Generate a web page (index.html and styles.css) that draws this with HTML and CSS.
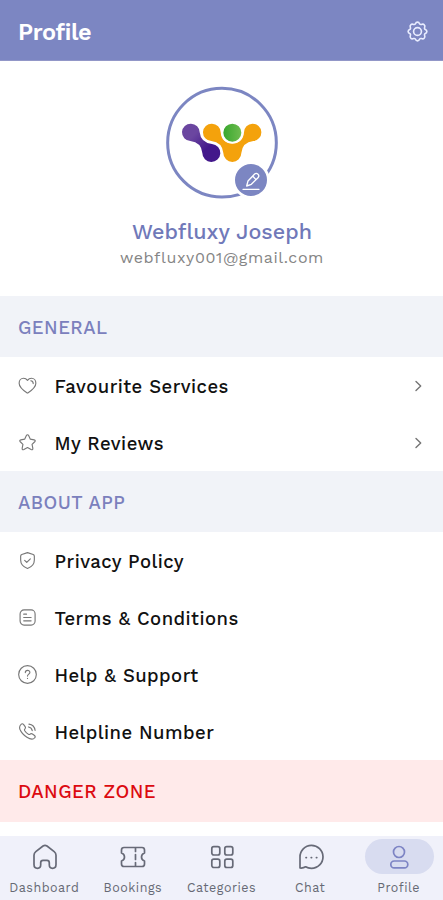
FILE: index.html
```html
<!DOCTYPE html>
<html lang="en">
<head>
<meta charset="utf-8">
<title>Profile</title>
<link rel="stylesheet" href="styles.css">
</head>
<body>
<div class="app">
  <header class="topbar">
    <h1 class="title">Profile</h1>
    <svg class="gear" viewBox="0 0 24 24"><path d="M12 2.2Q13.5 2.2 14.3 4.2Q15 5 16 4.6Q18 3.8 19 5Q20.2 6 19.4 8Q19 9 19.8 9.7Q21.8 10.5 21.8 12Q21.8 13.5 19.8 14.3Q19 15 19.4 16Q20.2 18 19 19Q18 20.2 16 19.4Q15 19 14.3 19.8Q13.5 21.8 12 21.8Q10.5 21.8 9.7 19.8Q9 19 8 19.4Q6 20.2 5 19Q3.8 18 4.6 16Q5 15 4.2 14.3Q2.2 13.5 2.2 12Q2.2 10.5 4.2 9.7Q5 9 4.6 8Q3.8 6 5 5Q6 3.8 8 4.6Q9 5 9.7 4.2Q10.5 2.2 12 2.2Z"/><circle cx="12" cy="12" r="4.1"/></svg>
  </header>
  <section class="user">
    <svg class="avatar" viewBox="0 0 405 375">
      <defs>
        <linearGradient id="violet" x1="0" y1="0" x2="1" y2="1"><stop offset=".3" stop-color="#6b46a0"/><stop offset=".65" stop-color="#43188b"/></linearGradient>
        <linearGradient id="green"><stop offset="0" stop-color="#35a62c"/><stop offset="1" stop-color="#72bd52"/></linearGradient>
      </defs>
      <circle cx="201" cy="188" r="163" fill="#fff" stroke="#7c86c2" stroke-width="9"/>
      <path fill="url(#violet)" d="M108 131A26 26 0 0 1 134 157Q137 188 171 192A27 27 0 1 1 142 219Q139 187 106 183A26 26 0 1 1 108 131Z"/>
      <path fill="#f4a20c" d="M171 131A26 26 0 0 1 197 157Q200 190 232 190Q264 190 267 157A26 26 0 1 1 295 183Q262 187 259 219A27 27 0 1 1 205 219Q202 187 169 183A26 26 0 1 1 171 131Z"/>
      <circle cx="232" cy="158" r="30" fill="url(#green)" stroke="#fff" stroke-width="6"/>
      <circle cx="288" cy="300" r="52" fill="#7c86c2" stroke="#fff" stroke-width="8"/>
      <g fill="none" stroke="#fff" stroke-width="4" stroke-linejoin="round" stroke-linecap="round"><path d="M264 328H312M275 318L279 303L299 282Q304 278 309 283Q314 288 309 293L289 313ZM293 288L303 299"/></g>
    </svg>
    <h2 class="name">Webfluxy Joseph</h2>
    <p class="email">webfluxy001@gmail.com</p>
  </section>

  <h3 class="section">GENERAL</h3>
  <div class="row">
    <svg class="icon" viewBox="0 0 20 20"><path d="M10 18C7 16 1.2 12.3 1.2 7.5C1.2 4.5 3.2 2.4 5.8 2.4C7.6 2.4 9 3.2 10 4.6C11 3.2 12.4 2.4 14.2 2.4C16.8 2.4 18.8 4.5 18.8 7.5C18.8 12.3 13 16 10 18ZM13.5 5Q16 5.2 16 8"/></svg>
    <span class="label">Favourite Services</span>
    <svg class="chevron" viewBox="0 0 12 14"><path d="M3 2.5L7.7 7L3 11.5"/></svg>
  </div>
  <div class="row">
    <svg class="icon" viewBox="0 0 20 20"><path d="M10 1.8Q10.8 1.8 11.3 3L13 6.5L17 7.2Q19 7.7 17.6 9.2L14.8 12L15.6 16Q15.8 18.3 13.8 17.4L10 15.3L6.2 17.4Q4.2 18.3 4.4 16L5.2 12L2.4 9.2Q1 7.7 3 7.2L7 6.5L8.7 3Q9.2 1.8 10 1.8Z"/></svg>
    <span class="label">My Reviews</span>
    <svg class="chevron" viewBox="0 0 12 14"><path d="M3 2.5L7.7 7L3 11.5"/></svg>
  </div>

  <h3 class="section">ABOUT APP</h3>
  <div class="row">
    <svg class="icon" viewBox="0 0 20 20"><path d="M10 1.7L16 3.7Q17.2 4.2 17.2 5.5V9.5C17.2 14 14 17 10 18.4C6 17 2.8 14 2.8 9.5V5.5Q2.8 4.2 4 3.7ZM7 9.8L9.2 12L13 8.2"/></svg>
    <span class="label">Privacy Policy</span>
  </div>
  <div class="row">
    <svg class="icon" viewBox="0 0 20 20"><rect x="2.2" y="2" width="15.8" height="16" rx="4.2"/><path d="M6 6.5H9M6 10H13.8M6 13.5H13.8"/></svg>
    <span class="label">Terms &amp; Conditions</span>
  </div>
  <div class="row">
    <svg class="icon" viewBox="0 0 20 20"><circle cx="10" cy="10" r="9.3"/><path d="M7.7 8C7.7 5 12.5 5 12.5 7.8C12.5 9.6 10 9.7 10 11.7M10 14V14.2"/></svg>
    <span class="label">Help &amp; Support</span>
  </div>
  <div class="row">
    <svg class="icon" viewBox="0 0 20 20"><path d="M3.2 2.5Q4.5 1.2 5.8 2.5L7.5 4.8Q8.3 6 7.3 7.2Q6.4 8 7.1 9.2Q8.7 11.7 11 13Q12 13.5 12.8 12.7Q13.9 11.8 15.2 12.6L17.4 14.2Q18.7 15.3 17.6 16.6C15.8 19 12.8 18.3 9.4 16.1C5.9 13.8 3.3 10.8 2 7.6C1.2 5.2 1.8 3.8 3.2 2.5ZM11.5 2.2Q17.2 3 18 8.8M11 5.2Q14.4 5.7 15 9.1"/></svg>
    <span class="label">Helpline Number</span>
  </div>

  <h3 class="section danger">DANGER ZONE</h3>

  <nav class="tabs">
    <a class="tab"><span class="pill"><svg viewBox="0 0 26 26"><path d="M2 11.2Q2 9 3.8 7.6L11 2Q13 .9 15 2L22.2 7.6Q24 9 24 11.2V20.5Q24 24.3 20.5 24.3Q17.3 24.3 17.3 20.8V18.8Q17.3 16.3 15 16.3H11Q8.7 16.3 8.7 18.8V20.8Q8.7 24.3 5.5 24.3Q2 24.3 2 20.5Z"/></svg></span><span>Dashboard</span></a>
    <a class="tab"><span class="pill"><svg viewBox="0 0 26 26"><path d="M4 3.5H22Q24.5 3.5 24.5 6V9Q21.5 10 21.5 13Q21.5 16 24.5 17V20Q24.5 22.5 22 22.5H4Q1.5 22.5 1.5 20V17Q4.5 16 4.5 13Q4.5 10 1.5 9V6Q1.5 3.5 4 3.5ZM15.5 4V7.5M15.5 10.5V15.5M15.5 18.5V22"/></svg></span><span>Bookings</span></a>
    <a class="tab"><span class="pill"><svg viewBox="0 0 26 26"><rect x="2.8" y="2.7" width="8" height="8.3" rx="2"/><rect x="15.8" y="2.7" width="8" height="8.3" rx="2"/><rect x="2.8" y="15.2" width="8" height="8.3" rx="2"/><rect x="15.8" y="15.2" width="8" height="8.3" rx="2"/></svg></span><span>Categories</span></a>
    <a class="tab"><span class="pill"><svg viewBox="0 0 26 26"><path d="M2 24V13A11.5 11.5 0 1 1 13.5 24.3Q10 24.3 7.6 22.8Q5.5 24.3 2 24ZM8 13.6H8.4M13.2 13.6H13.6M18.4 13.6H18.8"/></svg></span><span>Chat</span></a>
    <a class="tab active"><span class="pill"><svg viewBox="0 0 26 26"><circle cx="13" cy="8" r="5.5"/><rect x="4.8" y="17" width="17" height="6.8" rx="3.4"/></svg></span><span>Profile</span></a>
  </nav>
</div>
</body>
</html>
```
FILE: styles.css
```css
* { box-sizing: border-box; }
body { margin: 0; background: #fff; font-family: "Work Sans", Inter, sans-serif; }
h1, h2, h3, p { margin: 0; }
svg { display: block; fill: none; stroke-linecap: round; stroke-linejoin: round; }
.app { width: 443px; height: 900px; display: flex; flex-direction: column; overflow: hidden; }
.topbar { height: 61px; flex: none; background: #7c86c2; border-bottom: 1px solid #9297c8; display: flex; align-items: center; justify-content: space-between; padding: 3px 14px 0 18px; }
.title { padding-top: 1px; color: #fff; font-size: 23.5px; font-weight: 600; line-height: 28px; letter-spacing: -.4px; }
.gear { width: 23px; height: 23px; stroke: #e9edff; stroke-width: 1.7; }
.user { height: 235px; flex: none; display: flex; flex-direction: column; align-items: center; padding-top: 19px; }
.avatar { width: 135px; height: 125px; margin-left: 2px; }
.name { margin-top: 13px; padding-left: 1px; font-size: 21.5px; line-height: 28px; font-weight: 500; color: #7079b9; letter-spacing: .05px; white-space: nowrap; }
.email { padding-left: 1px; font-size: 16px; line-height: 24px; color: #858585; letter-spacing: .6px; white-space: nowrap; }
.section { height: 61px; flex: none; display: flex; align-items: center; padding: 2px 0 0 18px; background: #f1f3f8; color: #7b80bd; font-size: 18.5px; font-weight: 500; line-height: 24px; letter-spacing: .45px; }
.danger { height: 62px; background: #ffeaea; color: #dc0a10; }
.row { height: 57px; flex: none; display: flex; align-items: center; padding: 0 18px; color: #111; }
.icon { width: 19px; height: 19px; stroke: #777; stroke-width: 1.2; }
.label { margin-left: 17.5px; padding-top: 2px; font-size: 18.5px; line-height: 24px; font-weight: 500; letter-spacing: .45px; white-space: nowrap; }
.chevron { width: 12px; height: 14px; margin-left: auto; stroke: #757575; stroke-width: 1.4; }
.tabs { margin-top: auto; height: 64px; flex: none; background: #f0f1fa; display: grid; grid-template-columns: repeat(5, 1fr); }
.tab { display: flex; flex-direction: column; align-items: center; padding-top: 3px; font-size: 12.5px; line-height: 16px; letter-spacing: .5px; color: #666974; white-space: nowrap; }
.pill { width: 69px; height: 35px; margin-left: 1px; border-radius: 18px; display: flex; align-items: center; justify-content: center; margin-bottom: 6px; }
.pill svg { width: 26px; height: 26px; stroke: #676a77; stroke-width: 1.7; }
.active .pill { background: #d8dcf0; }
.active .pill svg { stroke: #7d84c4; }
```
